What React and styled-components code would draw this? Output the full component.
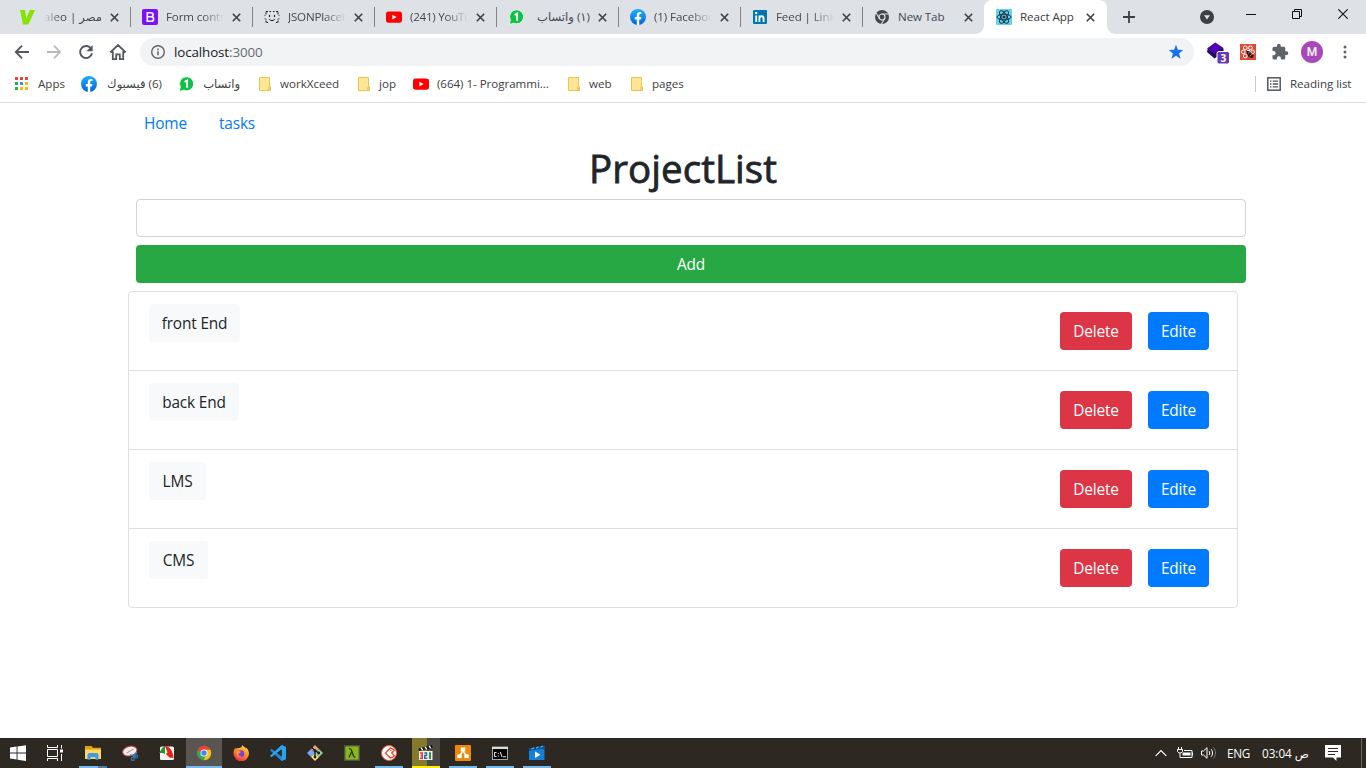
import React from "react";
import styled, { createGlobalStyle, css } from "styled-components";

const Global = createGlobalStyle`
  *, *::before, *::after { box-sizing: border-box; }
  html, body { margin: 0; padding: 0; background: #fff; overflow: hidden; }
  body { font-family: "Open Sans", "Noto Sans", "DejaVu Sans", sans-serif; }
  svg { display: block; flex: none; }
`;

const Screen = styled.div`
  width: 1366px;
  height: 768px;
  display: flex;
  flex-direction: column;
  background: #fff;
  overflow: hidden;
`;

/* ---------- tab strip ---------- */
const TabStrip = styled.div`
  height: 34px;
  flex: none;
  background: #dee1e6;
  display: flex;
  padding-left: 8px;
`;
const TabBox = styled.div`
  width: ${(p) => (p.$active ? 123 : 122)}px;
  height: 34px;
  display: flex;
  align-items: center;
  padding-left: 12px;
  position: relative;
  ${(p) =>
    p.$active &&
    css`
      background: #fff;
      border-radius: 8px 8px 0 0;
      &::before, &::after {
        content: "";
        position: absolute;
        bottom: 0;
        width: 8px;
        height: 8px;
      }
      &::before { left: -8px; background: radial-gradient(circle at 0 0, transparent 7.5px, #fff 8px); }
      &::after { right: -8px; background: radial-gradient(circle at 100% 0, transparent 7.5px, #fff 8px); }
    `}
  ${(p) =>
    p.$line &&
    css`
      &::after {
        content: "";
        position: absolute;
        right: -1px;
        top: 7px;
        width: 1px;
        height: 20px;
        background: #808388;
      }
    `}
`;
const TabTitle = styled.div`
  width: 58px;
  margin-left: 8px;
  height: 20px;
  line-height: 20px;
  font-size: 11.6px;
  letter-spacing: ${(p) => p.$ls || 0}px;
  color: ${(p) => (p.$active ? "#3c4043" : "#45494e")};
  white-space: nowrap;
  overflow: hidden;
  display: flex;
  justify-content: ${(p) => (p.$end ? "flex-end" : "flex-start")};
  ${(p) => p.$fade === "right" && "mask-image: linear-gradient(90deg, #000 62%, transparent);"}
  ${(p) => p.$fade === "left" && "mask-image: linear-gradient(270deg, #000 72%, transparent);"}
`;
const CloseIcon = styled.svg`
  margin-left: 8px;
`;
const PlusIcon = styled.svg`
  margin: 11px 0 0 16px;
`;
const WindowTools = styled.div`
  margin-left: auto;
  width: 166px;
  display: flex;
  align-items: flex-start;
`;
const ToolSlot = styled.div`
  width: ${(p) => p.$w}px;
  height: ${(p) => p.$h || 28}px;
  padding-left: ${(p) => p.$pl || 0}px;
  flex: none;
  display: flex;
  align-items: center;
  justify-content: center;
`;

/* ---------- toolbar ---------- */
const Toolbar = styled.div`
  height: 36px;
  flex: none;
  display: flex;
  align-items: center;
  padding-left: 6px;
`;
const Omnibox = styled.div`
  width: 1054px;
  flex: none;
  height: 28px;
  border-radius: 14px;
  background: #f1f3f4;
  margin-left: 6px;
  padding: 0 10px;
  display: flex;
  align-items: center;
  font-size: 13.4px;
  letter-spacing: -0.12px;
  color: #202124;
`;
const Url = styled.span`
  margin-left: 8px;
  flex: 1;
  line-height: 18px;
  span { color: #686c70; }
`;
const Avatar = styled.div`
  width: 22px;
  height: 22px;
  border-radius: 50%;
  background: #ab47bc;
  color: #fff;
  font: 500 12px/22px Roboto, sans-serif;
  text-align: center;
  flex: none;
`;

/* ---------- bookmarks ---------- */
const Bookmarks = styled.div`
  height: 33px;
  flex: none;
  display: flex;
  align-items: center;
  padding: 0 0 4px 14px;
  border-bottom: 1px solid #dadce0;
`;
const Bookmark = styled.div`
  display: flex;
  align-items: center;
  gap: 8px;
  margin-right: 16px;
`;
const BookmarkText = styled.div`
  width: ${(p) => p.$w}px;
  font-size: 11.6px;
  line-height: 18px;
  letter-spacing: ${(p) => p.$ls || 0}px;
  white-space: nowrap;
  color: #3c4043;
`;
const ReadingList = styled.div`
  margin-left: auto;
  height: 16px;
  width: 111px;
  border-left: 1px solid #c9ccd0;
  padding-left: 11px;
  display: flex;
  align-items: center;
  gap: 9px;
`;

/* ---------- page ---------- */
const Page = styled.main`
  flex: 1;
  width: 1110px;
  margin: 0 auto;
  font-size: 15.4px;
  line-height: 24px;
  letter-spacing: -0.15px;
  color: #212529;
`;
const Nav = styled.nav`
  display: flex;
  height: 41px;
`;
const NavLink = styled.a`
  padding: 9px 16px 7px;
  color: #007bff;
  width: 75px;
`;
const Title = styled.h1`
  margin: 0;
  height: 55px;
  line-height: 48px;
  font-size: 38.5px;
  font-weight: 400;
  -webkit-text-stroke: 0.8px #212529;
  letter-spacing: 0.05px;
  text-align: center;
`;
const Form = styled.form`
  margin: 0 -8px 8px 8px;
  display: flex;
  flex-direction: column;
  gap: 8px;
`;
const Input = styled.input`
  height: 38px;
  border: 1px solid #ced4da;
  border-radius: 4px;
  padding: 6px 12px;
  outline: none;
`;
const Button = styled.button`
  height: 38px;
  width: ${(p) => (p.$w ? p.$w + "px" : "auto")};
  padding: 2px 0 0;
  border: 0;
  border-radius: 4px;
  background: ${(p) => p.$bg};
  color: ${(p) => p.$color || "#fff"};
  font: inherit;
  letter-spacing: inherit;
  white-space: nowrap;
`;
const List = styled.ul`
  margin: 0;
  padding: 0;
  list-style: none;
  border: 1px solid #dfdfdf;
  border-radius: 4px;
`;
const Item = styled.li`
  height: 79px;
  padding: 12px 28px 0 20px;
  display: flex;
  justify-content: space-between;
  border-bottom: 1px solid #dfdfdf;
  &:last-child { border-bottom: 0; height: 78px; }
`;
const Actions = styled.div`
  display: flex;
  gap: 16px;
  padding-top: 8px;
`;

/* ---------- task bar ---------- */
const Taskbar = styled.footer`
  height: 30px;
  flex: none;
  background: #2d2822;
  display: flex;
  color: #fff;
`;
const Task = styled.div`
  width: ${(p) => p.$w || 37}px;
  height: 30px;
  display: flex;
  align-items: center;
  justify-content: center;
  position: relative;
  ${(p) =>
    p.$run &&
    css`
      &::after {
        content: "";
        position: absolute;
        bottom: 0;
        left: 5px;
        height: 2px;
        width: 28px;
        background: ${p.$run};
      }
    `}
  ${(p) =>
    p.$focus &&
    css`
      background: linear-gradient(#585552, #585552) 1px 0 / 36px 30px no-repeat;
      &::after { left: 1px; width: 36px; }
    `}
  ${(p) =>
    p.$progress &&
    css`
      background: linear-gradient(90deg, #857a2b 15px, #4c4944 15px) 5px 0 / 28px 30px no-repeat;
    `}
`;
const Tray = styled.div`
  margin-left: auto;
  width: 213px;
  display: flex;
  align-items: center;
  font-size: 11.7px;
  line-height: 18px;
  white-space: nowrap;
`;
const TrayText = styled.div`
  width: ${(p) => p.$w}px;
  margin-left: ${(p) => p.$ml}px;
  letter-spacing: ${(p) => p.$ls}px;
`;
const TrayIcon = styled.svg`
  margin-left: ${(p) => p.$ml}px;
`;
const Edge = styled.div`
  width: 1px;
  height: 30px;
  background: #69655f;
  margin-left: 20px;
`;

/* ---------- icons ---------- */
const Svg = ({ s = 16, vb = "0 0 16 16", children, ...r }) => (
  <svg width={s} height={s} viewBox={vb} fill="none" {...r}>{children}</svg>
);
const Youtube = () => (
  <Svg><rect y="2.5" width="16" height="11.2" rx="2.6" fill="#f00" /><path d="M6.4 5.7v4.8L10.6 8.1z" fill="#fff" /></Svg>
);
const Facebook = () => (
  <Svg>
    <defs><linearGradient id="fb" x1="0" y1="0" x2="0" y2="1"><stop stopColor="#1aafff" /><stop offset="1" stopColor="#0862e0" /></linearGradient></defs>
    <circle cx="8" cy="8" r="8" fill="url(#fb)" />
    <path d="M6.8 16v-5.6H4.8V8h2V6.2c0-2.1 1.2-3.2 3-3.2.8 0 1.6.1 1.6.1v2h-.9c-1 0-1.3.6-1.3 1.2V8h2.2l-.4 2.4H9.2V16z" fill="#fff" />
  </Svg>
);
const Whatsapp = () => (
  <Svg>
    <path d="M8.8.8a7 7 0 1 1-3 13.400L1.200 15.400l1.200-4.300A7 7 0 0 1 8.800.8z" fill="#0cc143" stroke="#fff" strokeWidth=".8" />
    <path d="M6.600 5.900 9.100 4.700v7" stroke="#fff" strokeWidth="2" />
  </Svg>
);
const Folder = () => (
  <Svg><path d="M3.5 1.500h10v9.500h1v3.500h-11z" fill="#ffe694" stroke="#e8c655" /><path d="M12.500 14.200V11.400l1-.9v4z" fill="#f6d365" stroke="#e8c655" strokeWidth=".6" /></Svg>
);
const AppsGrid = () => (
  <Svg>
    {["#ea4335", "#ea4335", "#ea4335", "#34a853", "#4285f4", "#fbbc04", "#34a853", "#fbbc04", "#fbbc04"].map((c, i) => (
      <rect key={i} x={1 + (i % 3) * 5} y={1 + Math.floor(i / 3) * 5} width="3" height="3" fill={c} />
    ))}
  </Svg>
);
const Valeo = () => <Svg><path d="M0 1h5.100l1.100 8.500L9.800 1H15L8.300 15.500H3z" fill="#82e600" /></Svg>;
const Bootstrap = () => (
  <Svg><rect width="16" height="16" rx="2" fill="#7a12f5" /><path d="M5.300 3.700h3.400c1.600 0 2.400.8 2.400 2 0 1.100-.7 1.900-2 2 1.600.1 2.500.9 2.500 2.200 0 1.500-1.100 2.400-2.800 2.400H5.300zM5.300 7.700h3.600" stroke="#fff" strokeWidth="1.600" /></Svg>
);
const Json = () => (
  <Svg>
    <path d="M4 2.500H2v3L.8 6.700M.8 9.300l1.200 1.200v3h2M12 2.500h2v3l1.200 1.200M15.200 9.300 14 10.500v3h-2" stroke="#111" strokeDasharray="2 .7" />
    <path d="M5.500 6v2M10.500 6v2M5.300 10.500h1M6.500 11.500h3M9.700 10.500h1M5.500 2.500h1.500M9 2.500h1.500" stroke="#111" />
  </Svg>
);
const LinkedIn = () => (
  <Svg><rect x="1" y="1" width="14" height="14" rx="1" fill="#0077b5" /><path d="M4.200 6.500V13M7.400 13V6.500M7.400 9.500c0-3 4.200-3 4.200 0V13" stroke="#fff" strokeWidth="1.800" /><circle cx="4.200" cy="4" r="1.200" fill="#fff" /></Svg>
);
const ChromeGray = () => (
  <Svg><circle cx="8" cy="8" r="7" fill="#43474b" /><circle cx="8" cy="8" r="3" stroke="#dee1e6" strokeWidth="1.200" /><path d="M8 5h6.400M5.400 9.500 2.200 4M10.600 9.500 7.500 15" stroke="#dee1e6" strokeWidth="1.100" /></Svg>
);
const ReactLogo = () => (
  <Svg>
    <rect width="16" height="16" rx="1" fill="#5ed3f3" />
    <g stroke="#20343c" strokeWidth="1">
      {[0, 60, 120].map((a) => <ellipse key={a} cx="8" cy="8" rx="7" ry="2.800" transform={`rotate(${a} 8 8)`} />)}
    </g>
    <circle cx="8" cy="8" r="1.500" fill="#20343c" />
  </Svg>
);
const Chrome = () => (
  <Svg>
    <circle cx="8" cy="8" r="7.200" fill="#34a853" />
    <path d="M8 8 1.700 4.400A7.200 7.200 0 0 1 14.300 4.400L14.300 5H8z" fill="#ea4335" />
    <path d="M8 8l2.600 1.600-3 5.600A7.200 7.200 0 0 0 14.400 4.800H8z" fill="#fbc116" />
    <path d="m1.800 4.300 3.700 5.300L8 8V4.700z" fill="#ea4335" />
    <circle cx="8" cy="8" r="3.500" fill="#fff" /><circle cx="8" cy="8" r="2.700" fill="#4285f4" />
  </Svg>
);
const Close = () => (
  <CloseIcon width="9" height="9" viewBox="0 0 9 9"><path d="m.8.8 7.400 7.400m0-7.400L.8 8.200" stroke="#3c4043" strokeWidth="1.600" /></CloseIcon>
);

const Back = ({ c = "#54585d", flip }) => (
  <Svg><g transform={flip ? "matrix(-1 0 0 1 16 0)" : undefined}><path d="M15 8H2M8 1.600 1.800 8 8 14.400" stroke={c} strokeWidth="1.800" /></g></Svg>
);
const Reload = () => (
  <Svg><path d="M13.300 5A6 6 0 1 0 14 9.200" stroke="#54585d" strokeWidth="1.900" /><path d="M14.600 1v6.200H8.400z" fill="#54585d" /></Svg>
);
const Home = () => (
  <Svg s={18} vb="0 0 18 18"><path d="M1.300 9.400 9 2l7.700 7.400M3.800 8.200v7.900h3.400v-4.800h3.600v4.800h3.400V8.200" stroke="#54585d" strokeWidth="1.800" /></Svg>
);
const Info = () => (
  <Svg><circle cx="8" cy="8" r="6.300" stroke="#5f6368" strokeWidth="1.400" /><path d="M8 7.200v4.100M8 4.600v1.600" stroke="#5f6368" strokeWidth="1.500" /></Svg>
);
const Star = () => (
  <Svg><path d="m8 .8 1.900 5 5.300.3-4.100 3.400 1.400 5.200L8 11.800l-4.500 2.900 1.400-5.200L.8 6.100l5.300-.3z" fill="#1a73e8" /></Svg>
);
const Layers = () => (
  <Svg s={24} vb="0 0 24 24">
    <path d="m1 12 7.500 6.500 9-6v-4l-8-5-8 6z" fill="#1d0d63" /><path d="m1 8.600 8.200-6 8 5.200-8.300 6z" fill="#5202b5" />
    <rect x="11" y="11.500" width="12.500" height="12.500" rx="2" fill="#6638b8" stroke="#fff" />
    <text x="17.300" y="21.600" textAnchor="middle" fontFamily="Open Sans, sans-serif" fontWeight="700" fontSize="10" fill="#fff">3</text>
  </Svg>
);
const RedExt = () => (
  <Svg>
    <rect width="16" height="16" fill="#df4b36" />
    <g stroke="#fff" strokeWidth="1"><circle cx="5.300" cy="3.800" r="1.900" /><circle cx="10.400" cy="3.800" r="1.900" /><circle cx="3.300" cy="7.900" r="1.800" /><circle cx="12.600" cy="7.900" r="1.800" /><circle cx="5.200" cy="12" r="1.900" /><path d="M6.500 6.500h3.500" /></g>
    <path d="m5.800 6.200 4 1.500 4 4-1.500 2.500-4-1.500z" fill="#2b1a18" /><path d="m8 9.500 2-1.900M9.700 12.300l2.400-2.600" stroke="#ffcb9f" strokeWidth=".6" />
  </Svg>
);
const Puzzle = () => (
  <Svg s={18} vb="0 0 24 24"><path fill="#5f6368" d="M20.500 11H19V7a2 2 0 0 0-2-2h-4V3.500a2.500 2.500 0 0 0-5 0V5H4a2 2 0 0 0-2 2v3.800h1.500a2.700 2.700 0 0 1 0 5.400H2V20a2 2 0 0 0 2 2h3.800v-1.500a2.700 2.700 0 0 1 5.400 0V22H17a2 2 0 0 0 2-2v-4h1.500a2.500 2.500 0 0 0 0-5z" /></Svg>
);
const Dots = () => (
  <Svg><circle cx="8" cy="3" r="1.500" fill="#5f6368" /><circle cx="8" cy="8" r="1.500" fill="#5f6368" /><circle cx="8" cy="13" r="1.500" fill="#5f6368" /></Svg>
);
const ListIcon = () => (
  <Svg s={14} vb="0 0 14 14"><rect x=".8" y=".8" width="12.400" height="12.400" stroke="#54585d" strokeWidth="1.500" /><path d="M3 4.200h1.500M3 7h1.500M3 9.800h1.500M5.700 4.200h5.400M5.700 7h5.400M5.700 9.800h5.400" stroke="#54585d" strokeWidth="1.300" /></Svg>
);

/* task bar drawings */
const Windows = () => <Svg><path d="M0 2.500 6.600 1.500V7.600H0zM7.500 1.400 16 .2V7.600H7.500zM0 8.500H6.600V14.600L0 13.600zM7.500 8.500H16V16L7.500 14.700z" fill="#fff" /></Svg>;
const TaskView = () => (
  <Svg><path d="M.5 0v2.500h10V0M.5 16v-2.500h10V16M.5 4.500h10v7H.5zM14.500 0v3.500M14.500 9v7" stroke="#fff" /><rect x="13" y="4.500" width="3" height="3" fill="#fff" /></Svg>
);
const Explorer = () => (
  <Svg><path d="M0 1h6.500L8 2.700h8V6H0z" fill="#e2a20c" /><path d="M0 4.500h16V14H0z" fill="#ffd662" /><path d="M2.500 14.800V10a2 2 0 0 1 2-2h7a2 2 0 0 1 2 2v4.800H10.500v-2.500h-5v2.500z" fill="#3f9be6" /></Svg>
);
const Snip = () => (
  <Svg><ellipse cx="7.800" cy="6" rx="7.300" ry="4.800" transform="rotate(-15 8 6)" fill="#eee" stroke="#c93535" /><path d="m4.500 8.200 7-4.200" stroke="#b98b8b" /><path d="m15 7-4.500 6M8 9.500l6 2" stroke="#3c8ac6" strokeWidth="1.200" /><circle cx="10.800" cy="13.900" r="1.500" stroke="#2c79b7" strokeWidth="1.300" /><circle cx="14" cy="11.300" r="1.500" stroke="#2c79b7" strokeWidth="1.300" /></Svg>
);
const Arrows = () => (
  <Svg><rect x="1" y="1.500" width="14" height="13.500" rx="1.500" fill="#f3f3f3" /><path d="M0 8 3.500 2.500 6 1v8.500L4.500 8z" fill="#23972f" /><path d="M6 1c5 .5 8 5 8.500 12l-4-.5L7 9l1.500-1.500z" fill="#e42313" /></Svg>
);
const Firefox = () => (
  <Svg>
    <defs><linearGradient id="ff" x1=".8" y1="0" x2=".3" y2="1"><stop stopColor="#ffe14a" /><stop offset=".5" stopColor="#ff8a1e" /><stop offset="1" stopColor="#f0245c" /></linearGradient></defs>
    <path d="M9.300 0c.8 1.500 2.700 2.300 3.700 3.400 0-.7-.2-1.200-.2-1.200C15 4 16 6.400 16 8.500A7.700 7.700 0 0 1 .5 8.600C.4 6.400 1 4 2.500 2.400v1.700c1-1 2.300-1.200 3.500-1C7.500 3 9.300 2 9.300 0z" fill="url(#ff)" />
    <circle cx="7.900" cy="8.700" r="3.400" fill="#7842d8" /><path d="M3.500 6.500c2-1 3.500-.2 4.500.2-.3 1-1.800 1.300-2.500 2.200-.4 1.800 1.700 3 3.600 2.600-2.300 2-6.200.6-5.600-5z" fill="#ff9a22" />
  </Svg>
);
const VsCode = () => (
  <Svg><path d="m11.600 0 4.400 2v12l-4.400 2L0 5.300l1.500-1.500L12 11.800z" fill="#1f8ad2" /><path d="M11.600 0 16 2v12l-4.400 2V4.200L1.500 12.200 0 10.700z" fill="#2aa2ee" /><path d="M11.800 4.700v6.600L7.500 8z" fill="#2d2822" /></Svg>
);
const Git = () => (
  <Svg><path d="m8 0 4 4L8 8 4 4z" fill="#f09a8c" /><path d="m4 4 4 4-4 4-4-4z" fill="#7aa7f5" /><path d="m12 4 4 4-4 4-4-4z" fill="#91cf9b" /><path d="m8 8 4 4-4 4-4-4z" fill="#ffe178" /><path d="M4.700 2.500 8 5.500v7M8 5.500l3.700 2.500" stroke="#191919" strokeWidth="1.300" /><circle cx="8" cy="5.600" r="1.400" fill="#191919" /><circle cx="8" cy="12" r="1.400" fill="#191919" /><circle cx="11.700" cy="8" r="1.400" fill="#191919" /></Svg>
);
const Lambda = () => (
  <Svg><rect x=".7" y=".7" width="14.600" height="14.600" fill="#8bb71a" stroke="#465343" strokeWidth="1.400" /><path d="M5 3.800c2-.6 2.300.7 2.800 2.200l1.700 5c.3.900.8 1.200 1.800.900M7.700 6.700 5 12.400" stroke="#29391b" strokeWidth="1.300" /></Svg>
);
const RedArrow = () => (
  <Svg><circle cx="8" cy="8" r="7.500" fill="#fff" stroke="#f05a3c" /><path d="M9.300 3 4.500 8l4.800 5c2.500-.7 4.200-2.300 4.200-2.300L10.800 8l2.700-2.700S12 3.500 9.300 3z" stroke="#f04e30" strokeWidth="1.400" /><circle cx="10" cy="5.600" r=".7" fill="#f04e30" /></Svg>
);
const Clapper = () => (
  <Svg>
    <rect x="1" y="6" width="13.500" height="9" fill="#eee" /><path d="M.5 3.500 14 0l.7 2.800L1 6z" fill="#111" /><path d="m3 3 1.800 2M7 2l1.800 2M11 1l1.800 2" stroke="#fff" strokeWidth="1.300" />
    <path d="M2 8h2.300v5.300H2M2.500 10.500h2" stroke="#e33b27" strokeWidth="1.400" /><path d="M6.300 8h2.200v2.500H6.700V13.300h2.500" stroke="#2770ae" strokeWidth="1.400" /><path d="M12 7.300V13.900" stroke="#25852d" strokeWidth="1.800" />
  </Svg>
);
const Drawio = () => (
  <Svg><rect width="16" height="16" rx="1" fill="#f08705" /><path d="M8 3v3L4.500 11M8 6l3.500 5" stroke="#fff" strokeWidth="1.600" /><rect x="5.700" y="2.500" width="4.600" height="4" fill="#fff" /><rect x="2.200" y="9.500" width="4.400" height="3.600" fill="#fff" /><rect x="9.400" y="9.500" width="4.400" height="3.600" fill="#fff" /></Svg>
);
const Cmd = () => (
  <Svg><rect x=".5" y="2" width="15" height="12.500" fill="#050505" stroke="#a4a4a4" /><path d="M0 3h16" stroke="#ddd" strokeWidth="2" /><path d="M4.500 7.500h-2v4h2M6.300 8v1M6.300 10.500v1M8.300 7l1.800 5M11 11.800h3" stroke="#fff" strokeWidth=".9" /></Svg>
);
const Movies = () => (
  <Svg><path d="M0 3.500h15.500V15H0z" fill="#1380dc" /><path d="M0 4 16 .5v2.800L0 6z" fill="#0b509d" /><path d="M2.500 4.300 5 2.700M7 3.300l2.500-1.600M11.500 2.300 14 .9" stroke="#4dc1f2" strokeWidth="1.200" /><path d="M6 6.500v6.500L11.500 9.800z" fill="#fff" /></Svg>
);

/* ---------- data ---------- */
const tabs = [
  { icon: <Valeo />, text: "Valeo | مصر", end: true, fade: "left" },
  { icon: <Bootstrap />, text: "Form controls", fade: "right", ls: -0.12 },
  { icon: <Json />, text: "JSONPlaceholder", fade: "right", ls: -0.2 },
  { icon: <Youtube />, text: "(241) YouTube", fade: "right", ls: -0.25 },
  { icon: <Whatsapp />, text: "(١) واتساب", rtl: true, end: true },
  { icon: <Facebook />, text: "(1) Facebook", fade: "right", ls: -0.1 },
  { icon: <LinkedIn />, text: "Feed | LinkedIn", fade: "right", ls: -0.12 },
  { icon: <ChromeGray />, text: "New Tab", ls: -0.1 },
  { icon: <ReactLogo />, text: "React App", active: true, ls: -0.05 },
];
const bookmarks = [
  { icon: <AppsGrid />, text: "Apps", w: 27 },
  { icon: <Facebook />, text: "(6) فيسبوك", w: 57, rtl: true },
  { icon: <Whatsapp />, text: "واتساب", w: 38, rtl: true },
  { icon: <Folder />, text: "workXceed", w: 59 },
  { icon: <Folder />, text: "jop", w: 18 },
  { icon: <Youtube />, text: "(664) 1- Programmi...", w: 112, ls: -0.05 },
  { icon: <Folder />, text: "web", w: 23 },
  { icon: <Folder />, text: "pages", w: 33 },
];
const projects = [
  { name: "front End", w: 91 },
  { name: "back End", w: 90 },
  { name: "LMS", w: 57 },
  { name: "CMS", w: 59 },
];
const blue = "#76b9ed";
const tasks = [
  { icon: <Explorer />, run: `linear-gradient(90deg, ${blue} 19px, #4f7c9e 19px)` },
  { icon: <Snip /> },
  { icon: <Arrows /> },
  { icon: <Chrome />, run: blue, focus: true },
  { icon: <Firefox /> },
  { icon: <VsCode /> },
  { icon: <Git /> },
  { icon: <Lambda /> },
  { icon: <RedArrow />, run: blue },
  { icon: <Clapper />, run: "#fff000", progress: true },
  { icon: <Drawio />, run: blue },
  { icon: <Cmd />, run: blue },
  { icon: <Movies />, run: blue },
];

export default function App() {
  return (
    <Screen>
      <Global />
      <TabStrip>
        {tabs.map((t, i) => (
          <TabBox key={t.text} $active={t.active} $line={i < 7}>
            {t.icon}
            <TabTitle $ls={t.ls} $end={t.end} $fade={t.fade} $active={t.active}>
              <span dir={t.rtl ? "rtl" : "ltr"}>{t.text}</span>
            </TabTitle>
            <Close />
          </TabBox>
        ))}
        <PlusIcon width="12" height="12" viewBox="0 0 12 12"><path d="M6 0v12M0 6h12" stroke="#3c4043" strokeWidth="1.800" /></PlusIcon>
        <WindowTools>
          <ToolSlot $w={14} $h={34}>
            <Svg><circle cx="8" cy="8" r="7" fill="#3c4043" /><path d="M5 6.200h6L8 10.600z" fill="#dee1e6" /></Svg>
          </ToolSlot>
          <ToolSlot $w={74}><Svg s={10} vb="0 0 10 10"><path d="M0 5.500h10" stroke="#111" /></Svg></ToolSlot>
          <ToolSlot $w={18}><Svg s={10} vb="0 0 10 10"><path d="M.5 2.500h7v7h-7zM2.500 2V.5h7v7H8" stroke="#111" /></Svg></ToolSlot>
          <ToolSlot $w={74}><Svg s={10} vb="0 0 10 10"><path d="m.3.3 9.400 9.400m0-9.400L.3 9.700" stroke="#111" strokeWidth="1.100" /></Svg></ToolSlot>
        </WindowTools>
      </TabStrip>

      <Toolbar>
        <ToolSlot $w={32}><Back /></ToolSlot>
        <ToolSlot $w={32}><Back c="#b9bbbe" flip /></ToolSlot>
        <ToolSlot $w={32}><Reload /></ToolSlot>
        <ToolSlot $w={32}><Home /></ToolSlot>
        <Omnibox>
          <Info />
          <Url>localhost<span>:3000</span></Url>
          <Star />
        </Omnibox>
        <ToolSlot $w={48} $h={26}><Layers /></ToolSlot>
        <ToolSlot $w={12}><RedExt /></ToolSlot>
        <ToolSlot $w={52}><Puzzle /></ToolSlot>
        <ToolSlot $w={12}><Avatar>M</Avatar></ToolSlot>
        <ToolSlot $w={48} $pl={5}><Dots /></ToolSlot>
      </Toolbar>

      <Bookmarks>
        {bookmarks.map((b) => (
          <Bookmark key={b.text}>
            {b.icon}
            <BookmarkText $w={b.w} $ls={b.ls} dir={b.rtl ? "rtl" : "ltr"}>{b.text}</BookmarkText>
          </Bookmark>
        ))}
        <ReadingList>
          <ListIcon />
          <BookmarkText $w={62} $ls={-0.05}>Reading list</BookmarkText>
        </ReadingList>
      </Bookmarks>

      <Page>
        <Nav>
          <NavLink>Home</NavLink>
          <NavLink>tasks</NavLink>
        </Nav>
        <Title>ProjectList</Title>
        <Form>
          <Input />
          <Button type="button" $bg="#28a745">Add</Button>
        </Form>
        <List>
          {projects.map((p) => (
            <Item key={p.name}>
              <Button $bg="#f8f9fa" $color="#212529" $w={p.w}>{p.name}</Button>
              <Actions>
                <Button $bg="#dc3545" $w={72}>Delete</Button>
                <Button $bg="#007bff" $w={61}>Edite</Button>
              </Actions>
            </Item>
          ))}
        </List>
      </Page>

      <Taskbar>
        <Task $w={36}><Windows /></Task>
        <Task $w={38}><TaskView /></Task>
        {tasks.map((t, i) => (
          <Task key={i} $run={t.run} $focus={t.focus} $progress={t.progress}>{t.icon}</Task>
        ))}
        <Tray>
          <TrayIcon $ml={2} width="12" height="8" viewBox="0 0 12 8" fill="none"><path d="m.7 6.800 5.300-5.300 5.300 5.300" stroke="#fff" strokeWidth="1.200" /></TrayIcon>
          <TrayIcon $ml={10} width="16" height="12" viewBox="0 0 16 12" fill="none">
            <path d="M1.500 0v2M4.500 0v2M.5 2.500h5v2L4 6H2L.5 4.500zM3 6v4.500h12v-7H7M15.500 5.500v3" stroke="#fff" /><path d="M5.500 5.500h8v3h-8z" fill="#fff" />
          </TrayIcon>
          <TrayIcon $ml={8} width="16" height="14" viewBox="0 0 16 14" fill="none">
            <path d="M.5 5h2L6 1.700v10.600L2.500 9h-2zM8 5c1 1 1 3 0 4M10 3.200c2 2 2 5.600 0 7.600" stroke="#fff" /><path d="M12.300 1.300c3 3 3 8.400 0 11.400" stroke="#77736e" />
          </TrayIcon>
          <TrayText $ml={10} $w={24} $ls={-0.3}>ENG</TrayText>
          <TrayText $ml={11} $w={46} $ls={-0.35}>03:04 ص</TrayText>
          <TrayIcon $ml={17} width="16" height="16" viewBox="0 0 16 16" fill="none">
            <path d="M0 0h16v12.500h-4.500V16L8 12.500H0z" fill="#fff" /><path d="M3 3.500h10M3 6.500h10M3 9.500h7" stroke="#2d2822" />
          </TrayIcon>
          <Edge />
        </Tray>
      </Taskbar>
    </Screen>
  );
}
